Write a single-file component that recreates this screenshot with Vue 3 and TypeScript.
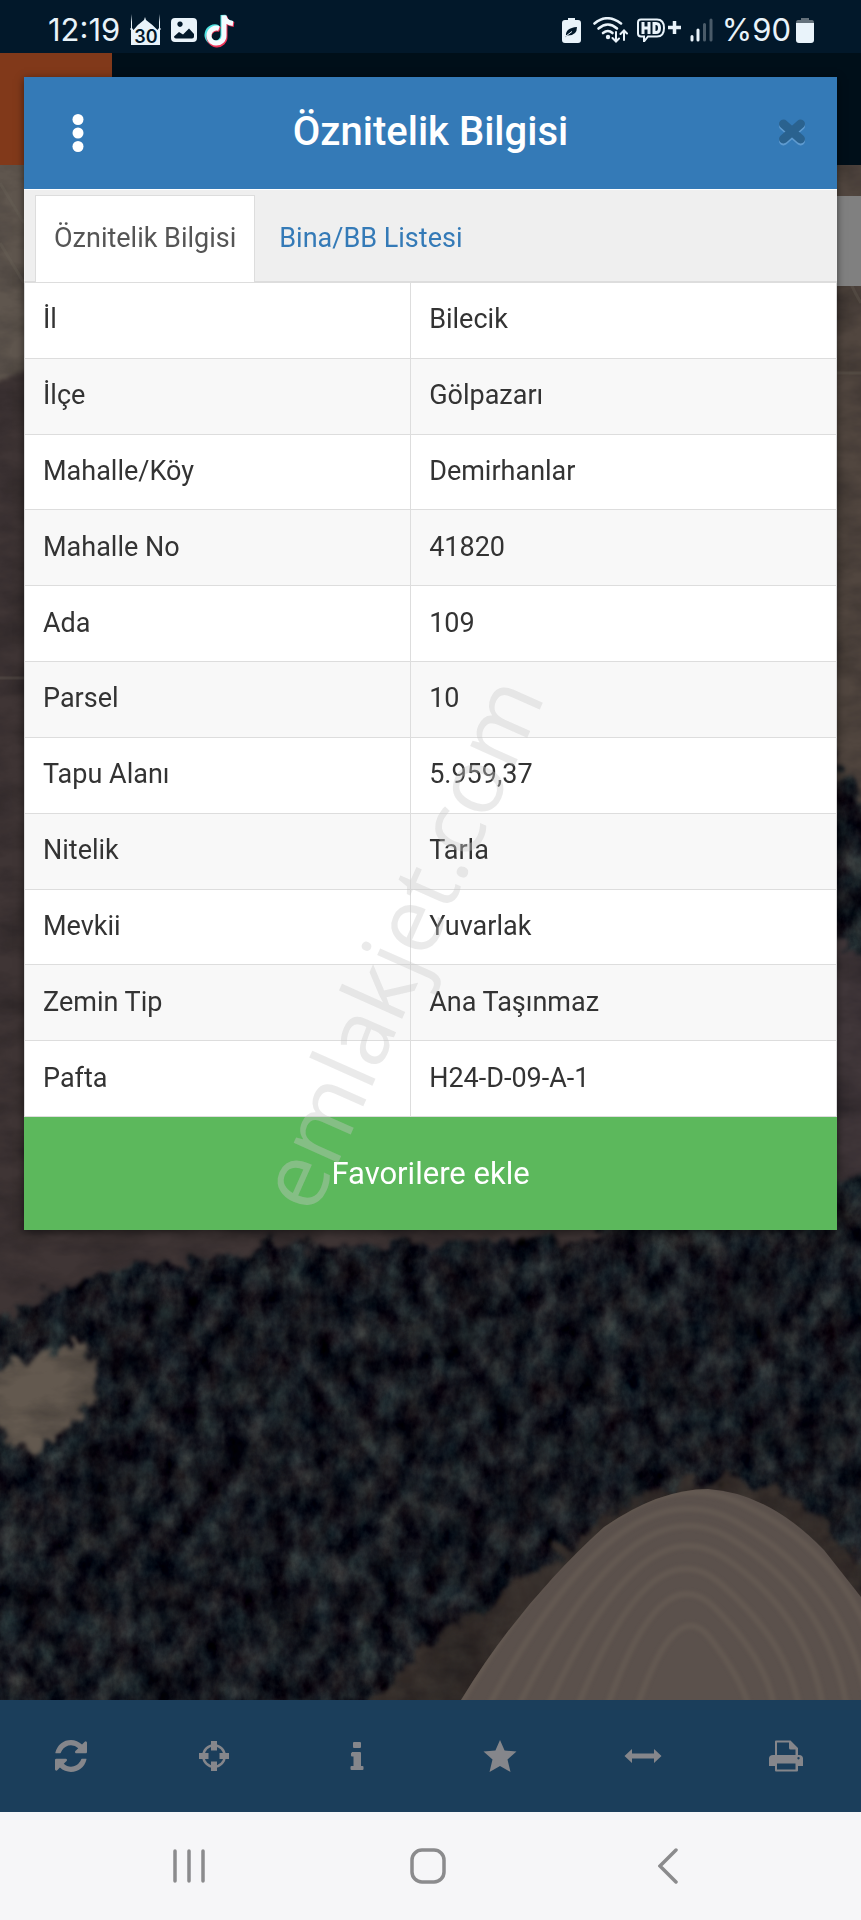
<script setup lang="ts">
import { ref } from 'vue'

interface Attribute {
  label: string
  value: string
}

interface Tool {
  label: string
  width: number
  height: number
  viewBox: string
  paths: string[]
}

const attributes: Attribute[] = [
  { label: 'İl', value: 'Bilecik' },
  { label: 'İlçe', value: 'Gölpazarı' },
  { label: 'Mahalle/Köy', value: 'Demirhanlar' },
  { label: 'Mahalle No', value: '41820' },
  { label: 'Ada', value: '109' },
  { label: 'Parsel', value: '10' },
  { label: 'Tapu Alanı', value: '5.959,37' },
  { label: 'Nitelik', value: 'Tarla' },
  { label: 'Mevkii', value: 'Yuvarlak' },
  { label: 'Zemin Tip', value: 'Ana Taşınmaz' },
  { label: 'Pafta', value: 'H24-D-09-A-1' },
]

const tabs: string[] = ['Öznitelik Bilgisi', 'Bina/BB Listesi']
const activeTab = ref(0)

const tools: Tool[] = [
  {
    label: 'Yenile',
    width: 32,
    height: 32,
    viewBox: '0 0 1536 1536',
    paths: [
      'M1511 928q0 5-1 7-64 268-268 434.500t-478 166.500q-146 0-282.500-55t-243.500-157l-129 129q-19 19-45 19t-45-19-19-45v-448q0-26 19-45t45-19h448q26 0 45 19t19 45-19 45l-137 137q71 66 161 102t187 36q134 0 250-65t186-179q11-17 53-117 8-23 30-23h192q13 0 22.500 9.500t9.500 22.500zM1536 128v448q0 26-19 45t-45 19h-448q-26 0-45-19t-19-45 19-45l138-138q-148-137-349-137-134 0-250 65t-186 179q-11 17-53 117-8 23-30 23h-199q-13 0-22.500-9.500t-9.500-22.500v-7q65-268 270-434.500t480-166.500q146 0 284 55.500t245 156.500l130-129q19-19 45-19t45 19 19 45z',
    ],
  },
  {
    label: 'Konum',
    width: 32,
    height: 32,
    viewBox: '0 0 32 32',
    paths: [
      'M16 4a12 12 0 1 0 0 24a12 12 0 1 0 0-24zM16 6.500a9.500 9.500 0 1 1 0 19a9.500 9.500 0 1 1 0-19z',
      'M13 1h6v9.500h-6zM13 21.500h6v9.500h-6zM1 13h9.500v6h-9.500zM21.500 13h9.500v6h-9.500z',
    ],
  },
  {
    label: 'Bilgi',
    width: 14,
    height: 30,
    viewBox: '0 0 14 30',
    paths: [
      'M4 1h6q1 0 1 1v4q0 1-1 1h-6q-1 0-1-1v-4q0-1 1-1zM2 11h8q1 0 1 1v13h1.500q1 0 1 1v2q0 1-1 1h-11q-1 0-1-1v-2q0-1 1-1h2v-9.500h-1.500q-1 0-1-1v-2q0-1 1-1z',
    ],
  },
  {
    label: 'Favoriler',
    width: 34,
    height: 34,
    viewBox: '0 0 34 34',
    paths: ['M17 1l4.600 10.400L33.500 12.500l-9 8l3 12.500L17 27L6.500 33l3-12.500l-9-8L12.400 11.400z'],
  },
  {
    label: 'Ölçüm',
    width: 38,
    height: 16,
    viewBox: '0 0 38 16',
    paths: ['M0.500 8L8 1v4.500h22V1l7.500 7l-7.500 7v-4.500H8V15z'],
  },
  {
    label: 'Yazdır',
    width: 34,
    height: 32,
    viewBox: '0 0 34 32',
    paths: [
      'M6 1.500q0-1 1-1h14.500L29 8v7h1q4 0 4 3.500V26h-5v4.500q0 1-1 1H7q-1 0-1-1V26H0v-7.500q0-3.500 4-3.500h2zM8 2.500V15h18.500V9.500h-5q-1.500 0-1.500-1.500V2.500zM8 23.500v6h18.500v-6zM29.500 17a1.200 1.200 0 1 0 .01 0z',
    ],
  },
]
</script>

<template>
  <div class="phone">
    <header class="status">
      <span class="clock">12:19</span>
      <svg class="notice mosque" width="31" height="32" viewBox="0 0 31 32" aria-hidden="true">
        <path fill="#e9f3fa" d="M1 31V16L0 15l1-1V8L1.500 0L2 8v6l1.500 2Q7 11 14 6l1-3l1 3q7 5 11.500 10l1.500-2V8l.5-8L30 8v6l1 1l-1 1v15z" />
        <text x="16" y="29" text-anchor="middle" class="day">30</text>
      </svg>
      <svg class="notice" width="26" height="26" viewBox="0 0 26 26" aria-hidden="true">
        <path fill="#e9f3fa" fill-rule="evenodd" d="M4 1h18q4 0 4 4v16q0 4-4 4H4q-4 0-4-4V5q0-4 4-4zM9 4.500a2.700 2.700 0 1 0 .01 0zM3 19.500q0 2 2 2h16q2 0 2-2V17l-5-5.500l-6 6l-4-2.500z" />
      </svg>
      <svg class="notice" width="28" height="32" viewBox="0 0 28 32" aria-hidden="true">
        <g fill="none" stroke-width="5">
          <path stroke="#4fe3e2" d="M11 13.500a8 8 0 1 0 5 7V1q1 7 8.500 8" />
          <path stroke="#ee3559" d="M13 15.500a8 8 0 1 0 5 7V3q1 6.500 9 7.500" />
          <path stroke="#f4fbff" d="M12 14.500a7.500 7.500 0 1 0 5 7V1.500q1 7 9 8" />
        </g>
      </svg>
      <div class="system">
        <svg width="19" height="25" viewBox="0 0 19 25" aria-hidden="true">
          <path fill="#e9f3fa" d="M6 0h7v2h3q3 0 3 3v17q0 3-3 3H3q-3 0-3-3V5q0-3 3-3h3z" />
          <path fill="#02182a" d="M4 18Q3 10 15 9q0 9-10 8.500l-2 2zM5.500 16.500l5-4" />
          <path stroke="#e9f3fa" stroke-width="1" fill="none" d="M4 18l6-4.500" />
        </svg>
        <svg class="wifi" width="35" height="26" viewBox="0 0 35 26" aria-hidden="true">
          <g fill="none" stroke="#e9f3fa" stroke-width="2.600" stroke-linecap="round">
            <path d="M1.500 6.500Q14-4 28 6.500" />
            <path d="M5.500 11.500q9.500-8 18.500 0" />
            <path d="M10 16q5-4 9.500 0" />
            <path d="M23 15v9m-3.500-3l3.500 3.500l3-3M31 23v-9m-3.500 3l3.500-3.500l3 3" stroke-width="2" />
          </g>
          <circle cx="15" cy="20" r="2.200" fill="#e9f3fa" />
        </svg>
        <svg class="hd" width="44" height="24" viewBox="0 0 44 24" aria-hidden="true">
          <path fill="none" stroke="#e9f3fa" stroke-width="2" d="M4 1.500h16q7 0 7 8.500t-7 8.500h-9l-4 5v-5H4q-3 0-3-3v-11q0-3 3-3z" />
          <path fill="none" stroke="#e9f3fa" stroke-width="3" d="M6 4v12M12 4v12M6 10h6M17 5.500v9h2q3.500 0 3.500-4.500t-3.500-4.500z" />
          <path stroke="#e9f3fa" stroke-width="3.500" d="M31 9.500h13M37.500 3v13" />
        </svg>
        <svg class="signal" width="23" height="24" viewBox="0 0 23 24" aria-hidden="true">
          <path stroke="#e9f3fa" stroke-width="3" stroke-linecap="round" d="M2 18.500v3.500M8 12v10" />
          <path stroke="#4a5b69" stroke-width="3" stroke-linecap="round" d="M14.500 6.500v15.500M21 2v20" />
        </svg>
        <span class="charge">%90</span>
        <svg width="18" height="25" viewBox="0 0 18 25" aria-hidden="true">
          <path fill="#64717b" d="M5 0h8v2h3q2 0 2 3H0q0-3 2-3h3z" />
          <path fill="#e9f3fa" d="M0 5h18v17q0 3-3 3H3q-3 0-3-3z" />
        </svg>
      </div>
    </header>

    <main class="stage">
      <div class="backdrop" aria-hidden="true">
        <svg class="map" viewBox="0 0 861 1647" preserveAspectRatio="xMidYMin slice">
          <defs>
            <filter id="forest" x="0" y="0" width="100%" height="100%" color-interpolation-filters="sRGB">
              <feTurbulence type="fractalNoise" baseFrequency="0.045 0.034" numOctaves="5" seed="11" />
              <feColorMatrix values="0.1 0.34 0 0 -0.13  0.02 0.4 0 0 -0.11  0 0.34 0.02 0 -0.055  0 0 0 0 1" />
            </filter>
            <filter id="grain" x="0" y="0" width="100%" height="100%" color-interpolation-filters="sRGB">
              <feTurbulence type="fractalNoise" baseFrequency="0.014 0.030" numOctaves="5" seed="4" />
              <feColorMatrix values="0 0 0 0 0.02  0 0 0 0 0.02  0 0 0 0 0.04  1.2 0 0 0 -0.45" />
            </filter>
            <filter id="rough" color-interpolation-filters="sRGB">
              <feTurbulence type="fractalNoise" baseFrequency="0.05" numOctaves="3" seed="8" />
              <feDisplacementMap in="SourceGraphic" scale="38" xChannelSelector="R" yChannelSelector="G" />
              <feGaussianBlur stdDeviation="2" />
            </filter>
            <filter id="soft">
              <feGaussianBlur stdDeviation="2" />
            </filter>
            <clipPath id="mound">
              <path d="M461 1647Q520 1550 604 1474Q659 1436 708 1436Q769 1440 824 1497L861 1544V1647z" />
            </clipPath>
          </defs>
          <rect width="861" height="1647" filter="url(#forest)" />
          <g filter="url(#rough)">
            <path fill="#3f3535" d="M-30-30H600V1186L270 1192L190 1212L100 1218L55 1238L-30 1285z" />
            <path fill="#51463f" d="M600-30H900V760L840 730L820 600H600z" />
            <path fill="#41373a" d="M800 880L900 915V1110L840 1130L800 1120z" />
            <path fill="#5f564e" d="M-30-30H60V300L-30 345z" />
            <path fill="#63594f" d="M-30 1330L40 1300L92 1290L92 1350L68 1374L32 1408L-30 1340z" />
            <path fill="#40362f" opacity="0.800" d="M370 1660L410 1600L480 1560L570 1488L650 1438L710 1424L790 1440L870 1520V1560L700 1450L600 1490L470 1660z" />
          </g>
          <rect width="861" height="1647" filter="url(#grain)" opacity="0.500" />
          <g fill="none" stroke="#6b625a" stroke-width="3" opacity="0.300">
            <path d="M0 130L24 170M0 190L24 230M0 625H24" />
            <path d="M861 250q-25-40-22-90M861 320h-30" />
          </g>
          <g clip-path="url(#mound)">
            <rect x="440" y="1420" width="421" height="227" fill="#5b514c" />
            <g filter="url(#soft)" fill="none" stroke="#7b6f62" stroke-width="5" opacity="0.350">
              <path d="M455 1660Q610 1390 740 1450T890 1660" />
              <path d="M485 1660Q620 1405 735 1468T870 1660" />
              <path d="M515 1660Q630 1425 730 1485T848 1660" />
              <path d="M545 1660Q640 1448 725 1505T824 1660" />
              <path d="M575 1660Q650 1470 720 1530T800 1660" />
              <path d="M605 1660Q660 1500 715 1555T775 1660" />
              <path d="M635 1660Q675 1540 710 1585T750 1660" />
            </g>
          </g>
        </svg>
        <div class="appbar"><span class="brand"></span></div>
        <span class="side-button"></span>
      </div>

      <section class="dialog" role="dialog" aria-labelledby="dialog-title">
        <header class="dialog-head">
          <button type="button" class="menu" aria-label="Menü">
            <svg width="12" height="40" viewBox="0 0 12 40">
              <g fill="#fff">
                <circle cx="6" cy="6.500" r="5.500" />
                <circle cx="6" cy="20" r="5.500" />
                <circle cx="6" cy="33.500" r="5.500" />
              </g>
            </svg>
          </button>
          <h1 id="dialog-title">Öznitelik Bilgisi</h1>
          <button type="button" class="close" aria-label="Kapat">
            <svg width="30" height="32" viewBox="0 0 30 32">
              <g fill="none" stroke-width="9" stroke-linecap="round">
                <path stroke="#5f9bd0" d="M6.500 9L23.500 24M23.500 9L6.500 24" />
                <path stroke="#2a628f" d="M6.500 7L23.500 22M23.500 7L6.500 22" />
              </g>
            </svg>
          </button>
        </header>

        <div class="tabs" role="tablist">
          <button
            v-for="(tab, index) in tabs"
            :key="tab"
            type="button"
            role="tab"
            class="tab"
            :class="{ active: index === activeTab }"
            :aria-selected="index === activeTab"
            @click="activeTab = index"
          >
            {{ tab }}
          </button>
        </div>

        <table class="attributes">
          <tbody>
            <tr v-for="item in attributes" :key="item.label">
              <th scope="row">{{ item.label }}</th>
              <td>{{ item.value }}</td>
            </tr>
          </tbody>
        </table>

        <button type="button" class="favourite">Favorilere ekle</button>
        <span class="watermark" aria-hidden="true">emlakjet.com</span>
      </section>
    </main>

    <nav class="toolbar" aria-label="Harita araçları">
      <button v-for="tool in tools" :key="tool.label" type="button" :aria-label="tool.label">
        <svg :width="tool.width" :height="tool.height" :viewBox="tool.viewBox">
          <path v-for="d in tool.paths" :key="d" :d="d" fill="#85868b" fill-rule="evenodd" />
        </svg>
      </button>
    </nav>

    <nav class="system-nav" aria-label="Sistem">
      <button type="button" aria-label="Son uygulamalar">
        <svg width="34" height="36" viewBox="0 0 34 36">
          <path stroke="#8b8b8d" stroke-width="3.500" stroke-linecap="round" d="M3 3v30M17 3v30M31 3v30" />
        </svg>
      </button>
      <button type="button" aria-label="Ana ekran">
        <svg width="36" height="36" viewBox="0 0 36 36">
          <rect x="2" y="2" width="32" height="32" rx="10" fill="none" stroke="#8b8b8d" stroke-width="3.500" />
        </svg>
      </button>
      <button type="button" aria-label="Geri">
        <svg width="20" height="36" viewBox="0 0 20 36">
          <path fill="none" stroke="#8b8b8d" stroke-width="3.500" stroke-linecap="round" d="M18 2L2 18L18 34" />
        </svg>
      </button>
    </nav>
  </div>
</template>

<style>
body {
  background: #02182a;
}
</style>

<style scoped>
.phone {
  display: flex;
  flex-direction: column;
  min-height: 100vh;
  font-family: Roboto, "Liberation Sans", sans-serif;
  color: #333;
}

button {
  display: flex;
  align-items: center;
  justify-content: center;
  padding: 0;
  border: 0;
  background: none;
  font: inherit;
  color: inherit;
  cursor: pointer;
}

svg {
  display: block;
  flex: none;
}

.status {
  display: flex;
  align-items: center;
  box-sizing: border-box;
  height: 53px;
  padding: 7px 47px 0 48px;
  background: #02182a;
  color: #e9f3fa;
  font-family: Inter, Roboto, sans-serif;
  font-size: 31px;
  line-height: 36px;
}

.notice {
  margin-left: 10px;
  overflow: visible;
}

.day {
  font-family: Inter, Roboto, sans-serif;
  font-size: 18px;
  font-weight: 600;
  fill: #02182a;
}

.system {
  display: flex;
  align-items: center;
  margin-left: auto;
}

.wifi {
  margin-left: 12px;
}

.hd {
  margin-left: 9px;
}

.signal {
  margin-left: 9px;
}

.charge {
  margin: 0 5px 0 9px;
}

.stage {
  position: relative;
  flex: 1;
}

.backdrop {
  position: absolute;
  inset: 0;
  overflow: hidden;
}

.map {
  width: 100%;
  height: 100%;
}

.appbar {
  position: absolute;
  inset: 0 0 auto;
  height: 112px;
  background: #000f19;
}

.brand {
  display: block;
  width: 112px;
  height: 100%;
  background: #81391a;
}

.side-button {
  position: absolute;
  top: 143px;
  right: 0;
  width: 90px;
  height: 90px;
  background: #808080;
}

.dialog {
  position: relative;
  margin: 24px;
  background: #fff;
  box-shadow: 0 2px 8px rgba(0, 0, 0, 0.5);
}

.dialog-head {
  display: flex;
  align-items: center;
  height: 112px;
  background: #347ab7;
  color: #fff;
}

.dialog-head h1 {
  flex: 1;
  margin: 0;
  padding-bottom: 2px;
  text-align: center;
  font-size: 40px;
  line-height: 48px;
  font-weight: 500;
}

.menu,
.close {
  box-sizing: border-box;
  width: 90px;
  height: 100%;
}

.menu {
  padding-left: 18px;
}

.tabs {
  display: flex;
  gap: 5px;
  padding: 5px 11px 0;
  border-top: 1px solid #fff;
  border-bottom: 1px solid #ddd;
  background: #efefef;
}

.tab {
  box-sizing: border-box;
  height: 87px;
  margin-bottom: -1px;
  padding: 0 18px 2px;
  border: 1px solid transparent;
  border-bottom: 0;
  font-size: 27px;
  line-height: 36px;
  color: #347ab7;
}

.tab.active {
  border-color: #ddd;
  background: #fff;
  color: #555;
}

.attributes {
  width: 100%;
  height: 835px;
  border-collapse: collapse;
  table-layout: fixed;
  font-size: 27px;
  line-height: 36px;
}

.attributes th,
.attributes td {
  padding: 0 18px 2px;
  border: 1px solid #ddd;
  text-align: left;
  font-weight: 400;
}

.attributes th {
  width: 43%;
}

.attributes tr:nth-child(even) {
  background: #f8f8f8;
}

.favourite {
  width: 100%;
  height: 113px;
  background: #5cb85c;
  color: #fff;
  font-size: 31px;
  line-height: 40px;
}

.watermark {
  position: absolute;
  top: 75%;
  left: 46%;
  font-family: "Open Sans", "Noto Sans", sans-serif;
  font-size: 91px;
  line-height: 108px;
  color: rgba(200, 200, 200, 0.38);
  transform: translate(-50%, -50%) rotate(-66deg);
  pointer-events: none;
}

.toolbar {
  display: flex;
  height: 112px;
  padding-right: 4px;
  background: #1b3e5b;
}

.toolbar button {
  flex: 1;
}

.system-nav {
  display: flex;
  justify-content: center;
  height: 108px;
  padding-right: 4px;
  background: #f6f6f8;
}

.system-nav button {
  width: 28%;
}
</style>
